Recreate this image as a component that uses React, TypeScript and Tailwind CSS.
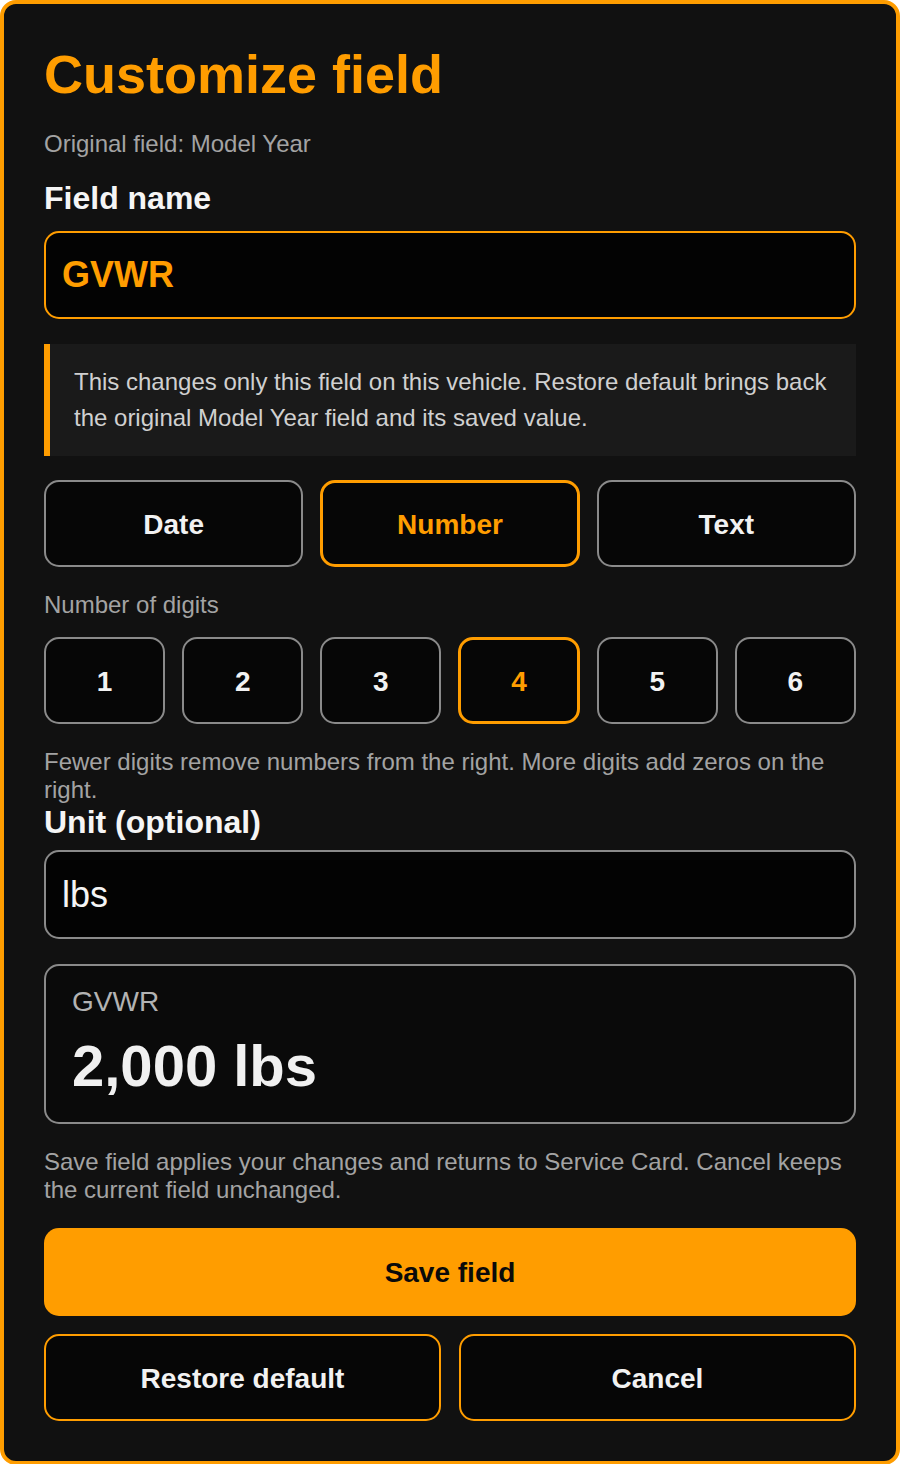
import React from "react";

export default function App() {
  const digits = [1, 2, 3, 4, 5, 6];
  const selectedDigit = 4;
  const types = ["Date", "Number", "Text"];
  const selectedType = "Number";

  return (
    <div
      className="w-[900px] min-h-[1464px] bg-[#111111] border-4 border-[#ff9d00] rounded-[16px] px-[40px] pt-[40px] pb-[40px] flex flex-col"
      style={{ fontFamily: '"Liberation Sans", Arial, sans-serif' }}
    >
      <h1 className="text-[54px] leading-[60px] font-bold text-[#ff9d00] m-0">
        Customize field
      </h1>

      <p className="mt-[26px] text-[24px] leading-[28px] text-[#a3a3a3]">
        Original field: Model Year
      </p>

      <label className="mt-[22px] text-[32px] leading-[36px] font-bold text-[#f5f5f5]">
        Field name
      </label>
      <input
        readOnly
        defaultValue="GVWR"
        className="mt-[15px] h-[88px] w-full box-border rounded-[15px] border-2 border-[#ff9d00] bg-[#030303] px-[16px] text-[36px] font-bold text-[#ff9d00] outline-none"
      />

      <div className="mt-[25px] bg-[#1a1a1a] border-l-[6px] border-[#ff9d00] pl-[24px] pr-[24px] py-[20px] text-[24px] leading-[36px] text-[#d0d0d0]">
        This changes only this field on this vehicle. Restore default brings back the original Model Year field and its saved value.
      </div>

      <div className="mt-[24px] grid grid-cols-3 gap-[17px]">
        {types.map((t) => {
          const sel = t === selectedType;
          return (
            <button
              key={t}
              className={
                sel
                  ? "h-[87px] pt-[3px] box-border rounded-[15px] border-[3px] border-[#ff9d00] bg-[#060606] text-[28px] font-bold text-[#ff9d00]"
                  : "h-[87px] pt-[3px] box-border rounded-[15px] border-2 border-[#8a8a8a] bg-[#060606] text-[28px] font-bold text-[#f2f2f2]"
              }
            >
              {t}
            </button>
          );
        })}
      </div>

      <p className="mt-[24px] text-[24px] leading-[28px] text-[#a3a3a3]">
        Number of digits
      </p>

      <div className="mt-[18px] grid grid-cols-6 gap-[17px]">
        {digits.map((d) => {
          const sel = d === selectedDigit;
          return (
            <button
              key={d}
              className={
                sel
                  ? "h-[87px] pt-[3px] box-border rounded-[15px] border-[3px] border-[#ff9d00] bg-[#060606] text-[28px] font-bold text-[#ff9d00]"
                  : "h-[87px] pt-[3px] box-border rounded-[15px] border-2 border-[#8a8a8a] bg-[#060606] text-[28px] font-bold text-[#f2f2f2]"
              }
            >
              {d}
            </button>
          );
        })}
      </div>

      <p className="mt-[24px] text-[24px] leading-[28px] text-[#a3a3a3]">
        Fewer digits remove numbers from the right. More digits add zeros on the right.
      </p>

      <label className="text-[32px] leading-[36px] font-bold text-[#f5f5f5]">
        Unit (optional)
      </label>
      <input
        readOnly
        defaultValue="lbs"
        className="mt-[10px] h-[89px] w-full box-border rounded-[15px] border-2 border-[#8a8a8a] bg-[#030303] px-[16px] text-[36px] text-[#f5f5f5] outline-none"
      />

      <div className="mt-[25px] box-border rounded-[15px] border-2 border-[#8a8a8a] bg-[#0a0a0a] px-[26px] pt-[20px] pb-[24px] flex flex-col">
        <span className="text-[28px] leading-[32px] text-[#b3b3b3]">GVWR</span>
        <span className="mt-[16px] text-[58px] leading-[64px] font-bold text-[#f0f0f0]">
          2,000 lbs
        </span>
      </div>

      <p className="mt-[24px] text-[24px] leading-[28px] text-[#a3a3a3]">
        Save field applies your changes and returns to Service Card. Cancel keeps the current field unchanged.
      </p>

      <button className="mt-[24px] h-[88px] pt-[2px] w-full rounded-[15px] bg-[#ff9d00] text-[28px] font-bold text-[#0a0a0a]">
        Save field
      </button>

      <div className="mt-[18px] grid grid-cols-2 gap-[18px]">
        <button className="h-[87px] pt-[2px] box-border rounded-[15px] border-2 border-[#ff9d00] bg-[#060606] text-[28px] font-bold text-[#f2f2f2]">
          Restore default
        </button>
        <button className="h-[87px] pt-[2px] box-border rounded-[15px] border-2 border-[#ff9d00] bg-[#060606] text-[28px] font-bold text-[#f2f2f2]">
          Cancel
        </button>
      </div>
    </div>
  );
}
